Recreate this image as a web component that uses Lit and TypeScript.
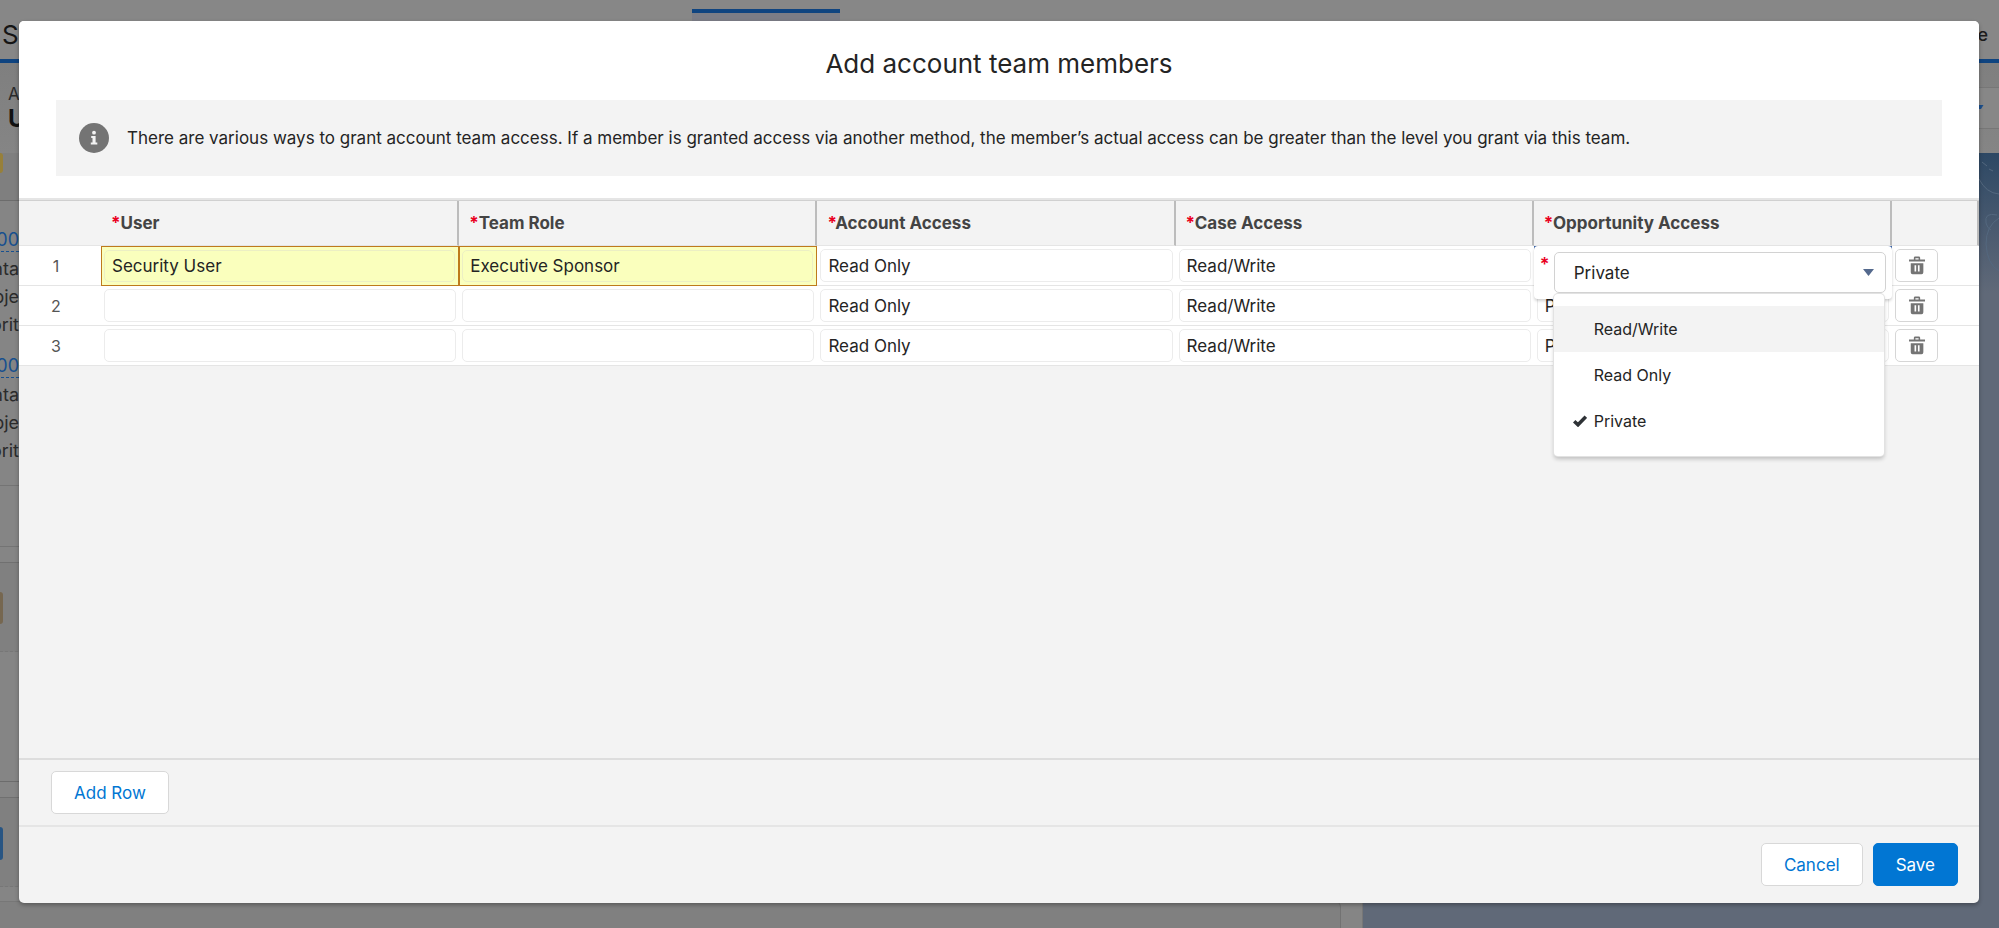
import { LitElement, html, css, svg, nothing } from "lit";
import { customElement, property, state } from "lit/decorators.js";
import { classMap } from "lit/directives/class-map.js";

interface Member {
  user: string;
  role: string;
  account: string;
  caseAccess: string;
  opportunity: string;
}

const COLUMNS = ["User", "Team Role", "Account Access", "Case Access", "Opportunity Access"];
const LEVELS = ["Read/Write", "Read Only", "Private"];

const trashIcon = svg`
  <path d="M0 3.300h16.500v2.200H0z M5 3.600V1.600Q5 .2 6.400.2h3.700q1.400 0 1.400 1.400v2H9.900V1.900H6.600v1.700z" />
  <path fill-rule="evenodd" d="M1.800 7.200h13v9.300q0 1.900-1.900 1.900H3.700q-1.900 0-1.900-1.900z M5.700 9.200v6.400h1.700V9.200z M9.200 9.200v6.400h1.700V9.200z" />`;

@customElement("backdrop-page")
class BackdropPage extends LitElement {
  static styles = css`
    :host {
      display: flex;
      flex-direction: column;
      height: 100%;
      overflow: hidden;
      background: #858585;
      color: #2b2b2b;
      font-size: 18px;
    }
    .top {
      height: 9px;
      flex: none;
      background: #878787;
    }
    .nav {
      height: 50px;
      flex: none;
      display: grid;
      grid-template-columns: 692px 148px 1fr;
      background: #878787;
      border-bottom: 4px solid #0f4480;
    }
    .app {
      padding: 10px 0 0 2px;
      font-size: 26px;
      line-height: 32px;
      color: #151515;
    }
    .tab {
      border-top: 4px solid #0f4480;
      background: #7c7d86;
    }
    .more {
      padding: 10px 11px 0 0;
      text-align: right;
      font-size: 18px;
      line-height: 32px;
      font-weight: 500;
      color: #1c1c1c;
    }
    .head {
      height: 90px;
      flex: none;
      display: flex;
      justify-content: space-between;
      background: linear-gradient(#7f7f7f, #858585);
    }
    .name {
      padding: 20px 0 0 8px;
      font-size: 17px;
      line-height: 22px;
    }
    .name strong {
      display: block;
      font-size: 24px;
      line-height: 28px;
      color: #111;
    }
    .action {
      width: 60px;
      height: 40px;
      margin-top: 24px;
      border: solid #777;
      border-width: 1px 0;
      background: #878787;
      display: flex;
      align-items: center;
      justify-content: flex-end;
    }
    .action svg {
      width: 10px;
      height: 4px;
      margin: 0 15px 2px 0;
      fill: #1c4f8c;
    }
    .body {
      flex: 1;
      display: grid;
      grid-template-columns: 1363px 1fr;
      min-height: 0;
    }
    .rail {
      background: #858585;
      border-right: 1px solid #777;
      box-sizing: border-box;
      padding-right: 21px;
      overflow: hidden;
    }
    .sky {
      background: linear-gradient(#2d4864, #4b5b70 80px, #606978 140px);
      display: flex;
      justify-content: flex-end;
    }
    .swirl {
      width: 20px;
      height: 140px;
      fill: none;
      stroke: #54687f;
      stroke-width: 1;
    }
    .chip {
      width: 3px;
      height: 20px;
      border-radius: 0 3px 3px 0;
      background: #97803a;
    }
    .chip.brown {
      height: 32px;
      background: #766750;
    }
    .chip.blue {
      height: 33px;
      background: #285583;
    }
    .intro {
      height: 47px;
      border-bottom: 1px solid #6c6c6c;
      background: #7f7f7f;
    }
    .group {
      width: 19px;
      padding-top: 28px;
      display: flex;
      flex-direction: column;
      align-items: flex-end;
      line-height: 28px;
    }
    .group + .group {
      padding-top: 16px;
    }
    .link {
      color: #17508f;
      text-decoration: none;
      border-bottom: 1px dashed #17508f;
      line-height: 22px;
      margin-bottom: 3px;
    }
    .space {
      height: 20px;
      border-bottom: 1px solid #747474;
    }
    .foot {
      height: 60px;
      border-bottom: 1px solid #747474;
    }
    .card {
      margin-top: 15px;
      height: 59px;
      padding-top: 29px;
      border-top: 1px solid #707070;
      border-bottom: 1px dashed #777;
      background: #808080;
    }
    .blank {
      height: 129px;
      border-bottom: 1px solid #6c6c6c;
    }
    .last {
      margin-top: 14px;
      height: 60px;
      border-top: 1px solid #777;
      border-right: 1px solid #727272;
      border-radius: 0 6px 0 0;
      background: #808080;
    }
  `;

  render() {
    return html`
      <div class="top"></div>
      <div class="nav">
        <div class="app">S</div>
        <div class="tab"></div>
        <div class="more">e</div>
      </div>
      <div class="head">
        <div class="name">A<strong>U</strong></div>
        <div class="action">
          <svg viewBox="0 0 10 4"><path d="M0 0h9.500L7 4H2z" /></svg>
        </div>
      </div>
      <div class="body">
        <div class="rail">
          <div class="intro"><div class="chip"></div></div>
          ${[0, 1].map(
            () => html`<div class="group">
              <a class="link" href="#">00</a>
              <span>nta</span><span>bje</span><span>orit</span>
            </div>`
          )}
          <div class="space"></div>
          <div class="foot"></div>
          <div class="card"><div class="chip brown"></div></div>
          <div class="blank"></div>
          <div class="card"><div class="chip blue"></div></div>
          <div class="last"></div>
        </div>
        <div class="sky">
          <svg class="swirl" viewBox="0 0 20 140">
            <path d="M3 9l5 4M10 16l4 2M0 26q7 14 20 15M18 62q-13-3-11 8q1 5 5 7M20 65q-13 8-13 26q1 20 13 27" />
          </svg>
        </div>
      </div>
    `;
  }
}

@customElement("access-picker")
class AccessPicker extends LitElement {
  @property() value = "";
  @property() label = "";

  static styles = css`
    :host {
      display: block;
      position: absolute;
      z-index: 2;
      top: 0;
      left: 0;
      right: 0;
    }
    .panel {
      display: flex;
      gap: 6px;
      padding: 6px;
      border-radius: 4px;
      background: #fff;
      box-shadow: 0 2px 3px rgba(0, 0, 0, 0.18);
    }
    .req {
      width: 8px;
      color: #ea001e;
      font-size: 18px;
      font-weight: 600;
      line-height: 26px;
    }
    .box {
      flex: 1;
      position: relative;
      display: flex;
    }
    select {
      flex: 1;
      height: 41px;
      padding: 0 19px;
      border: 1px solid #d2d2d2;
      border-radius: 5px;
      background: #fff;
      color: #242424;
      font: inherit;
      appearance: none;
    }
    .arrow {
      position: absolute;
      right: 12px;
      top: 17px;
      width: 11px;
      height: 7px;
      fill: #54698d;
      pointer-events: none;
    }
    .menu {
      position: absolute;
      top: 48px;
      left: 20px;
      right: 8px;
      margin: 0;
      padding: 12px 0;
      list-style: none;
      background: #fff;
      border-radius: 4px;
      box-shadow: 0 0 0 1px #e2e2e2, 0 3px 4px rgba(0, 0, 0, 0.22);
    }
    .option {
      display: grid;
      grid-template-columns: 14px 1fr;
      gap: 7px;
      align-items: center;
      width: 100%;
      height: 46px;
      padding: 0 19px;
      border: 0;
      background: none;
      color: #242424;
      font: inherit;
      font-size: 16px;
      text-align: left;
    }
    .option.active {
      background: #f3f3f3;
    }
    .tick {
      width: 14px;
      height: 12px;
      fill: none;
      stroke: #2e3236;
      stroke-width: 3.5;
    }
  `;

  render() {
    return html`
      <div class="panel">
        <span class="req">*</span>
        <div class="box">
          <select aria-label=${this.label}>
            ${LEVELS.map((l) => html`<option ?selected=${l === this.value}>${l}</option>`)}
          </select>
          <svg class="arrow" viewBox="0 0 11 7"><path d="M0 0h11L5.5 7z" /></svg>
        </div>
      </div>
      <ul class="menu">
        ${LEVELS.map(
          (l, i) => html`<li>
            <button class=${classMap({ option: true, active: i === 0 })}>
              <svg class="tick" viewBox="0 0 14 12">
                ${l === this.value ? svg`<path d="M1.2 6.2L5 9.8L12.8 1.6" />` : nothing}
              </svg>
              <span>${l}</span>
            </button>
          </li>`
        )}
      </ul>
    `;
  }
}

@customElement("app-root")
class AppRoot extends LitElement {
  @state() private members: Member[] = [
    { user: "Security User", role: "Executive Sponsor", account: "Read Only", caseAccess: "Read/Write", opportunity: "Private" },
    { user: "", role: "", account: "Read Only", caseAccess: "Read/Write", opportunity: "Private" },
    { user: "", role: "", account: "Read Only", caseAccess: "Read/Write", opportunity: "Private" },
  ];

  static styles = css`
    :host {
      display: grid;
      height: 100vh;
      min-height: 600px;
      overflow: hidden;
      font-family: Inter, "Liberation Sans", sans-serif;
      font-size: 17px;
      color: #242424;
    }
    backdrop-page,
    .overlay {
      grid-area: 1 / 1;
      min-width: 0;
      min-height: 0;
    }
    .overlay {
      box-sizing: border-box;
      z-index: 1;
      display: flex;
      padding: 21px 20px 25px 19px;
    }
    .dialog {
      flex: 1;
      min-width: 0;
      display: flex;
      flex-direction: column;
      border-radius: 5px;
      background: #f3f3f3;
      box-shadow: 0 2px 4px rgba(0, 0, 0, 0.3);
      overflow: hidden;
    }
    .header {
      background: #fff;
      padding: 25px 37px 22px;
      border-bottom: 2px solid #e5e5e5;
    }
    .title {
      margin: 0 0 18px;
      font-size: 26px;
      line-height: 36px;
      font-weight: 400;
      text-align: center;
    }
    .notice {
      display: flex;
      align-items: center;
      gap: 18px;
      min-height: 76px;
      padding: 0 23px;
      background: #f3f3f3;
      line-height: 24px;
    }
    .notice p {
      margin: 0;
    }
    .info {
      flex: none;
      width: 30px;
      height: 30px;
    }
    .grid {
      flex: 1;
      border-bottom: 2px solid #dddddd;
    }
    table {
      width: 100%;
      table-layout: fixed;
      border-spacing: 0;
      border-top: 1px solid #d0d0d0;
    }
    .num {
      width: 82px;
    }
    .act {
      width: 87px;
    }
    th {
      box-sizing: border-box;
      height: 45px;
      padding: 0 10px;
      border-bottom: 1px solid #e5e5e5;
      border-right: 2px solid #bcbcbc;
      text-align: left;
      font-weight: 700;
      color: #444;
    }
    th:first-child {
      border-right: 0;
    }
    .star {
      color: #ea001e;
    }
    td {
      box-sizing: border-box;
      height: 40px;
      padding: 3px;
      background: #fff;
      border-bottom: 1px solid #e5e5e5;
      position: relative;
    }
    .count {
      padding-right: 11px;
      text-align: center;
      font-size: 16px;
      color: #555;
    }
    .cell {
      display: block;
      box-sizing: border-box;
      width: 100%;
      height: 33px;
      padding: 0 7px;
      border: 1px solid #ececec;
      border-radius: 5px;
      background: none;
      color: #242424;
      font: inherit;
    }
    .edited {
      background: #faffbd;
      border: 1px solid #be7a1c;
      padding: 3px 3px 3px 2px;
    }
    .edited .cell {
      height: 32px;
      border-color: #ecefc4;
    }
    .editing {
      box-shadow: inset 0 0 0 2px #3a63a6;
    }
    .trash {
      display: grid;
      place-items: center;
      box-sizing: border-box;
      width: 43px;
      height: 33px;
      padding: 0;
      border: 1px solid #d6d6d6;
      border-radius: 5px;
      background: #fff;
    }
    .trash svg {
      width: 16px;
      height: 19px;
      fill: #747474;
    }
    .toolbar {
      display: flex;
      padding: 11px 32px 11px;
      border-bottom: 2px solid #e5e5e5;
    }
    .footer {
      display: flex;
      justify-content: flex-end;
      gap: 10px;
      padding: 16px 21px 17px;
    }
    .btn {
      height: 43px;
      padding: 0 22px;
      border: 1px solid #d8d8d8;
      border-radius: 5px;
      background: #fff;
      color: #0176d3;
      font: inherit;
    }
    .btn.brand {
      background: #0176d3;
      border-color: #0176d3;
      color: #fff;
    }
  `;

  private cell(value: string, label: string, edited = false) {
    return html`<td class=${classMap({ edited })}>
      <input class="cell" type="text" aria-label=${label} .value=${value} />
    </td>`;
  }

  private row(m: Member, i: number) {
    const n = i + 1;
    return html`<tr>
      <td class="count">${n}</td>
      ${this.cell(m.user, `User, row ${n}`, i === 0)}
      ${this.cell(m.role, `Team Role, row ${n}`, i === 0)}
      ${this.cell(m.account, `Account Access, row ${n}`)}
      ${this.cell(m.caseAccess, `Case Access, row ${n}`)}
      ${i === 0
        ? html`<td class="editing">
            <access-picker .value=${m.opportunity} .label=${"Opportunity Access, row 1"}></access-picker>
          </td>`
        : this.cell(m.opportunity, `Opportunity Access, row ${n}`)}
      <td>
        <button class="trash" aria-label=${`Delete row ${n}`}>
          <svg viewBox="0 0 16.5 19">${trashIcon}</svg>
        </button>
      </td>
    </tr>`;
  }

  render() {
    return html`
      <backdrop-page></backdrop-page>
      <div class="overlay">
        <section class="dialog" role="dialog" aria-labelledby="title">
          <header class="header">
            <h2 class="title" id="title">Add account team members</h2>
            <div class="notice">
              <svg class="info" viewBox="0 0 30 30">
                <circle cx="15" cy="15" r="15" fill="#747474" />
                <g fill="#f3f3f3">
                  <circle cx="15" cy="9.7" r="1.9" />
                  <path d="M12.2 13h4.4v6.4h1.7v2h-6.500v-2h1.700v-4.400h-1.300z" />
                </g>
              </svg>
              <p>
                There are various ways to grant account team access. If a member is granted access via another method,
                the member’s actual access can be greater than the level you grant via this team.
              </p>
            </div>
          </header>
          <div class="grid">
            <table>
              <thead>
                <tr>
                  <th class="num"></th>
                  ${COLUMNS.map((c) => html`<th><span class="star">*</span>${c}</th>`)}
                  <th class="act"></th>
                </tr>
              </thead>
              <tbody>
                ${this.members.map((m, i) => this.row(m, i))}
              </tbody>
            </table>
          </div>
          <div class="toolbar"><button class="btn">Add Row</button></div>
          <footer class="footer">
            <button class="btn">Cancel</button>
            <button class="btn brand">Save</button>
          </footer>
        </section>
      </div>
    `;
  }
}
